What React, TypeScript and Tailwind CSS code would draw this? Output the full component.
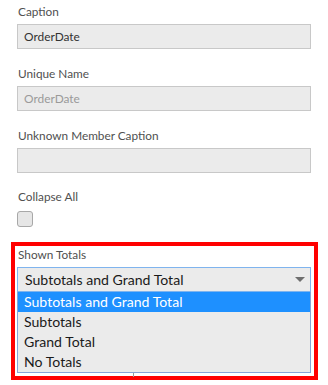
import React from "react";

function Label({ children }: { children: React.ReactNode }) {
  return (
    <div className="h-[16px] leading-[16px] text-[11.8px] text-[#505050] pl-[1px] whitespace-nowrap">
      {children}
    </div>
  );
}

function TextBox({ value, disabled }: { value?: string; disabled?: boolean }) {
  return (
    <div
      className={
        "mt-[4px] h-[25px] border border-[#c8c8c8] bg-[#ebebeb] pl-[6px] flex items-center text-[11.9px] " +
        (disabled ? "text-[#9a9a9a]" : "text-[#333333]")
      }
    >
      {value}
    </div>
  );
}

export default function App() {
  const options = ["Subtotals and Grand Total", "Subtotals", "Grand Total", "No Totals"];
  return (
    <div className="w-[328px] h-[385px] overflow-hidden bg-white [font-family:Lato,'Open_Sans',sans-serif]">
      <div className="px-[17px] pt-[4px]">
        <Label>Caption</Label>
        <TextBox value="OrderDate" />
        <div className="h-[17px]" />
        <Label>Unique Name</Label>
        <TextBox value="OrderDate" disabled />
        <div className="h-[17px]" />
        <Label>Unknown Member Caption</Label>
        <TextBox />
        <div className="h-[16px]" />
        <Label>Collapse All</Label>
        <div className="mt-[6px] w-[16px] h-[16px] rounded-[3px] border border-[#a8a8a8] bg-[#e6e6e6]" />
      </div>
      <div className="mt-[15px] ml-[11px] w-[307px] border-4 border-[#ff0000] pt-[1px] pl-[2px] pr-[3px] pb-[3px] relative">
        <Label>Shown Totals</Label>
        <div className="mt-[4px] h-[25px] border border-[#7fb4ee] bg-[#ebebeb] pl-[7px] pr-[5px] flex items-center justify-between text-[14.1px] text-[#1a1a1a]">
          <span>Subtotals and Grand Total</span>
          <svg width="10" height="5" viewBox="0 0 10 5" className="block">
            <path d="M0 0 H10 L5 5 Z" fill="#6e6e6e" />
          </svg>
        </div>
        <div className="border border-t-0 border-[#86a3d6] bg-[#ebebeb]">
          {options.map((o, i) => (
            <div
              key={o}
              className={
                "h-[20px] leading-[20px] pl-[6px] text-[14.1px] whitespace-nowrap " +
                (i === 0 ? "bg-[#1e90ff] text-white" : "text-[#1a1a1a]")
              }
            >
              {o}
            </div>
          ))}
        </div>
        <div className="absolute left-[118px] bottom-[-1px] w-[1px] h-[4px] bg-[#9a9a9a]" />
      </div>
    </div>
  );
}
